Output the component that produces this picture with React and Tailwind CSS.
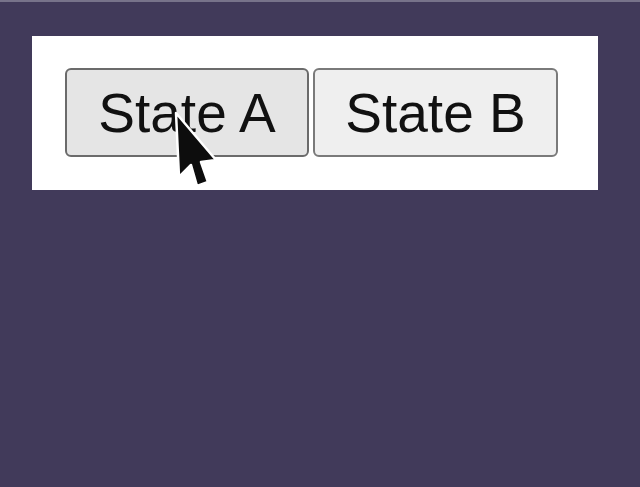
import React from "react";

const Cursor = () => (
  <svg
    className="absolute left-[170px] top-[108px] pointer-events-none"
    width="56"
    height="86"
    viewBox="0 0 56 86"
  >
    <path
      d="M6 5 L9 69 L21 57 L27 78 L38 74 L31 54 L46 52 Z"
      fill="#0d0d0d"
      stroke="#fff"
      strokeWidth="2.5"
      strokeLinejoin="round"
    />
  </svg>
);

export default function App() {
  return (
    <div className="relative w-[640px] h-[487px] bg-[#413a5a] overflow-hidden">
      <div className="h-[2px] bg-[#77738a]" />
      <div className="ml-[32px] mt-[34px] w-[566px] bg-white pl-[33px] pt-[32px] pb-[33px]">
        <div className="flex gap-[4px]">
          <button
            className="w-[244px] h-[89px] rounded-[6px] border-2 border-[#6b6b6b] bg-[#e5e5e5] text-[#111] text-[55px] leading-none pt-[2px]"
            style={{ fontFamily: '"Liberation Sans", Arial, sans-serif' }}
          >
            State A
          </button>
          <button
            className="w-[245px] h-[89px] rounded-[6px] border-2 border-[#7a7a7a] bg-[#efefef] text-[#111] text-[55px] leading-none pt-[2px]"
            style={{ fontFamily: '"Liberation Sans", Arial, sans-serif' }}
          >
            State B
          </button>
        </div>
      </div>
      <Cursor />
    </div>
  );
}
